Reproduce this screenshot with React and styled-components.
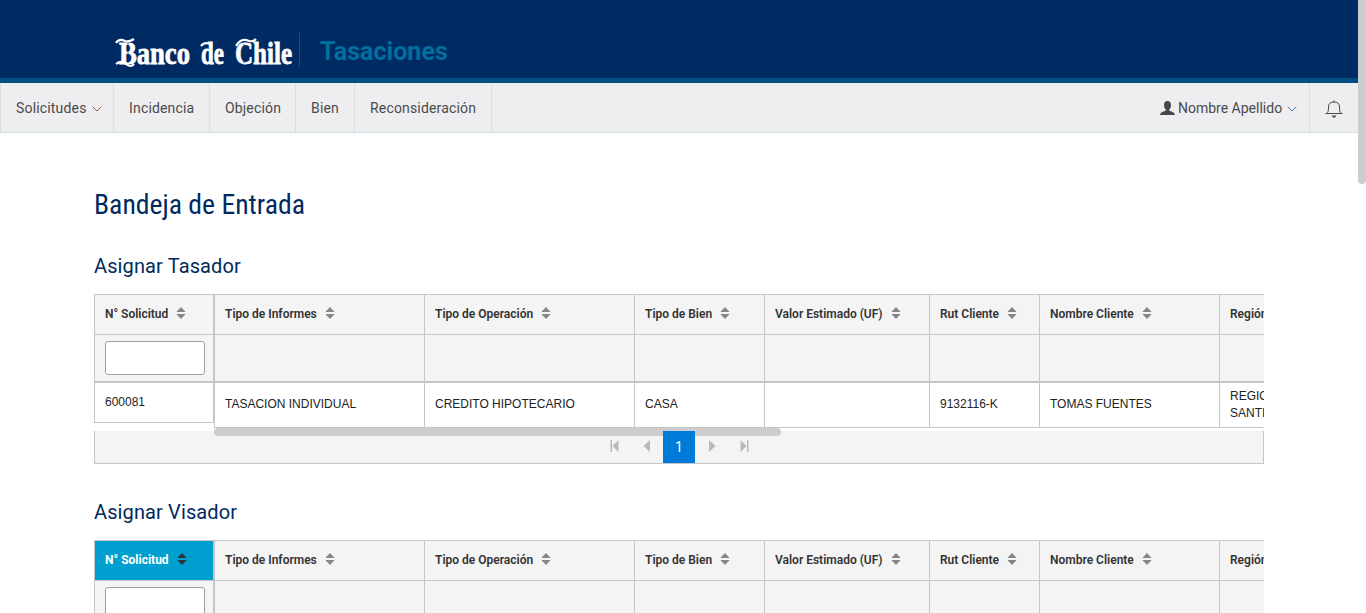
import React from "react";
import styled, { createGlobalStyle } from "styled-components";

const Global = createGlobalStyle`
  *, *::before, *::after { box-sizing: border-box; }
  html, body { margin: 0; background: #fff; overflow: hidden; }
  body { font-family: Roboto, "Liberation Sans", sans-serif; color: #333; }
`;

const Window = styled.div`
  display: flex;
  height: 613px;
  overflow: hidden;
`;

const Page = styled.div`
  width: 1358px;
  flex: none;
`;

const ScrollTrack = styled.div`
  width: 8px;
  background: #fff;
`;

const ScrollThumb = styled.div`
  height: 184px;
  border-radius: 0 0 4px 4px;
  background: #cdcdcf;
`;

const Header = styled.header`
  display: flex;
  align-items: flex-start;
  height: 83px;
  padding: 33px 0 0 114px;
  background: #002b62;
  border-bottom: 5px solid #004f83;
`;

const Logo = styled.svg`
  display: block;
  width: 185px;
  height: 38px;
  flex: none;
  overflow: visible;
`;

const AppName = styled.div`
  height: 34px;
  padding-left: 20px;
  border-left: 1px solid #00588c;
  color: #006f9f;
  font-size: 25px;
  font-weight: 700;
  line-height: 37px;
  letter-spacing: 0.05px;
`;

const Nav = styled.nav`
  display: flex;
  height: 50px;
  background: #eeeef0;
  border-left: 1px solid #dcdfe2;
  border-bottom: 1px solid #cfe3e6;
`;

const NavItem = styled.a`
  display: flex;
  align-items: center;
  gap: 5px;
  width: ${(p) => p.$width}px;
  padding-left: 15px;
  border-right: 1px solid #dcdfe2;
  color: #4a4a4d;
  font-size: 14px;
  letter-spacing: 0.17px;
  white-space: nowrap;
`;

const User = styled(NavItem)`
  margin-left: auto;
  padding-left: 0;
  gap: 3px;
  letter-spacing: 0;

  svg:last-child { margin-left: 2px; }
`;

const Bell = styled.div`
  display: flex;
  align-items: center;
  justify-content: center;
  width: 48px;
  padding: 3px 1px 0 0;
`;

const Content = styled.main`
  width: 1170px;
  margin-left: 94px;
  padding-top: 52px;
`;

const Title = styled.h1`
  margin: 0;
  height: 39px;
  color: #002a60;
  font-family: "Roboto Condensed", Roboto, sans-serif;
  font-size: 27.7px;
  font-stretch: 75%;
  font-weight: 400;
  line-height: 40px;
  white-space: nowrap;
`;

const Section = styled.section`
  height: 246px;
  padding-top: 27px;
`;

const SectionTitle = styled.h2`
  margin: 0;
  height: 43px;
  color: #002a60;
  font-size: 20px;
  font-weight: 400;
  line-height: 30px;
  letter-spacing: 0.12px;
`;

const Table = styled.div`
  display: flex;
  height: 137px;
  align-items: flex-start;
`;

const Frozen = styled.div`
  width: 120px;
  flex: none;
  border-right: 1px solid #c6c6c6;
`;

const Scrolling = styled.div`
  width: 1050px;
  overflow: hidden;
`;

const Row = styled.div`
  display: flex;
  height: ${(p) => p.$height}px;
  border-top: ${(p) => p.$top || 0}px solid #c6c6c6;
  border-bottom: ${(p) => p.$bottom || 0}px solid #c6c6c6;
  background: ${(p) => (p.$plain ? "#fff" : "#f4f4f4")};
`;

const Cell = styled.div`
  display: flex;
  align-items: center;
  flex: none;
  width: ${(p) => p.$width}px;
  padding: 0 10px;
  border-left: 1px solid #c6c6c6;
  font-family: "Liberation Sans", Arial, sans-serif;
  font-size: 12px;
  line-height: 17px;
  color: #222;
`;

const DataCell = styled(Cell)`
  padding-bottom: 1px;
`;

const HeadCell = styled(Cell)`
  gap: 8px;
  padding-right: 0;
  font-family: Roboto, sans-serif;
  font-weight: ${(p) => (p.$active ? 700 : 600)};
  letter-spacing: 0;
  white-space: nowrap;
  color: ${(p) => (p.$active ? "#fff" : "#333")};
  background: ${(p) => (p.$active ? "#009fcf" : "transparent")};
`;

const SortSvg = styled.svg`
  display: block;
  margin-top: -3px;
  flex: none;
`;

const Filter = styled.input`
  display: block;
  width: 100px;
  height: 34px;
  border: 1px solid #a0a0a0;
  border-radius: 3px;
  background: #fff;
`;

const Pager = styled.div`
  position: relative;
  display: flex;
  justify-content: center;
  height: 33px;
  background: #f4f4f4;
  border: 1px solid #c6c6c6;
  border-top: 0;
`;

const HScroll = styled.div`
  position: absolute;
  top: -3px;
  left: 119px;
  width: 567px;
  height: 8px;
  border-radius: 4px;
  background: #cdcdcf;
`;

const PageButton = styled.span`
  position: relative;
  display: flex;
  align-items: center;
  justify-content: center;
  width: ${(p) => (p.$active ? 32 : 33)}px;
  height: 32px;
  color: #fff;
  background: ${(p) => (p.$active ? "#007ad9" : "transparent")};
  font-size: 14px;
`;

const ChevronSvg = styled.svg`
  margin-top: 2px;
  flex: none;
`;

const ArrowSvg = styled.svg`
  margin-top: -2px;
  flex: none;
`;

const Chevron = ({ color }) => (
  <ChevronSvg width="10" height="6" viewBox="0 0 10 6">
    <path d="M.7 .7 5 5 9.3 .7" fill="none" stroke={color} strokeWidth="1" />
  </ChevronSvg>
);

const Sort = ({ active }) => (
  <SortSvg width="10" height="12" viewBox="0 0 10 12">
    <path d="M5 0 9.700 5H.3Z M.3 7H9.700L5 12Z" fill={active ? "#333" : "#868686"} />
  </SortSvg>
);

const Arrow = ({ back, end }) => (
  <ArrowSvg width="10" height="12" viewBox="0 0 10 12">
    <g fill="#b9b9b9" transform={back ? "translate(10 0) scale(-1 1)" : undefined}>
      <path d={end ? "M.5 0 6.500 6 .5 12Z M7 0H8.500V12H7Z" : "M2 0 8.500 6 2 12Z"} />
    </g>
  </ArrowSvg>
);

const columns = [
  ["Tipo de Informes", 210, "TASACION INDIVIDUAL"],
  ["Tipo de Operación", 210, "CREDITO HIPOTECARIO"],
  ["Tipo de Bien", 130, "CASA"],
  ["Valor Estimado (UF)", 165, ""],
  ["Rut Cliente", 110, "9132116-K"],
  ["Nombre Cliente", 180, "TOMAS FUENTES"],
  ["Región", 210, "REGION METROPOLITANA DE SANTIAGO"],
];

function Inbox({ title, sorted }) {
  return (
    <Section>
      <SectionTitle>{title}</SectionTitle>
      <Table>
        <Frozen>
          <Row $height={41} $top={1} $bottom={1}>
            <HeadCell $width={119} $active={sorted}>N° Solicitud<Sort active={sorted} /></HeadCell>
          </Row>
          <Row $height={48} $bottom={2}>
            <Cell $width={119}><Filter /></Cell>
          </Row>
          <Row $height={40} $bottom={1} $plain><Cell $width={119}>600081</Cell></Row>
        </Frozen>
        <Scrolling>
          <Row $height={41} $top={1} $bottom={1}>
            {columns.map(([label, width]) => <HeadCell key={label} $width={width}>{label}<Sort /></HeadCell>)}
          </Row>
          <Row $height={48} $bottom={2}>
            {columns.map(([label, width]) => <Cell key={label} $width={width} />)}
          </Row>
          <Row $height={45} $bottom={1} $plain>
            {columns.map(([label, width, value]) => <DataCell key={label} $width={width}>{value}</DataCell>)}
          </Row>
        </Scrolling>
      </Table>
      <Pager>
        <HScroll />
        <PageButton><Arrow back end /></PageButton>
        <PageButton><Arrow back /></PageButton>
        <PageButton $active>1</PageButton>
        <PageButton><Arrow /></PageButton>
        <PageButton><Arrow end /></PageButton>
      </Pager>
    </Section>
  );
}

export default function App() {
  return (
    <Window>
      <Global />
      <Page>
        <Header>
          <Logo viewBox="0 0 185 38">
            <g fill="#fff" stroke="#fff" strokeWidth=".8" fontFamily="Liberation Serif, serif" fontSize="32" fontWeight="700">
              <text x="5" y="31" textLength="71" lengthAdjust="spacingAndGlyphs">Banco</text>
              <text x="87" y="31" textLength="23" lengthAdjust="spacingAndGlyphs">de</text>
              <text x="121" y="31" textLength="57" lengthAdjust="spacingAndGlyphs">Chile</text>
            </g>
            <path d="M2 10Q5 5 11 8Q16 9 20 6M2 31Q7 27 12 31T20 31M122 13Q127 4 135 8Q139 9 142 6M87 13Q91 8 98 12" fill="none" stroke="#fff" strokeWidth="2.2" />
            <path d="M14 10V30M130 11V30" stroke="#002b62" strokeWidth=".8" />
          </Logo>
          <AppName>Tasaciones</AppName>
        </Header>
        <Nav>
          <NavItem $width={113}>Solicitudes<Chevron color="#a65a42" /></NavItem>
          <NavItem $width={96}>Incidencia</NavItem>
          <NavItem $width={86}>Objeción</NavItem>
          <NavItem $width={59}>Bien</NavItem>
          <NavItem $width={137}>Reconsideración</NavItem>
          <User $width={150}>
            <svg width="15" height="14" viewBox="0 0 15 14">
              <path d="M7.5 0C4.8 0 4 1.7 4 4c0 2 .7 3.6 1.8 4.5v1C4.5 10.500 0 11 0 14H15c0-3-4.500-3.500-5.800-4.500v-1C10.300 7.600 11 6 11 4c0-2.300-.8-4-3.500-4Z" fill="#48484a" />
            </svg>
            Nombre Apellido
            <Chevron color="#5377a8" />
          </User>
          <Bell>
            <svg width="18" height="18" viewBox="0 0 18 18" fill="none" stroke="#48484a">
              <path d="M1.500 13.500C3.300 12.500 3.500 10.500 3.500 7 3.500 3.500 5.500 2 9 2s5.500 1.500 5.500 5c0 3.500.2 5.500 2 6.500" />
              <path d="M.5 13.500H17.500M9 .5V2" />
              <path d="M6.500 15.500H11.500L10 17.500H8Z" fill="#48484a" stroke="none" />
            </svg>
          </Bell>
        </Nav>
        <Content>
          <Title>Bandeja de Entrada</Title>
          <Inbox title="Asignar Tasador" />
          <Inbox title="Asignar Visador" sorted />
        </Content>
      </Page>
      <ScrollTrack><ScrollThumb /></ScrollTrack>
    </Window>
  );
}
